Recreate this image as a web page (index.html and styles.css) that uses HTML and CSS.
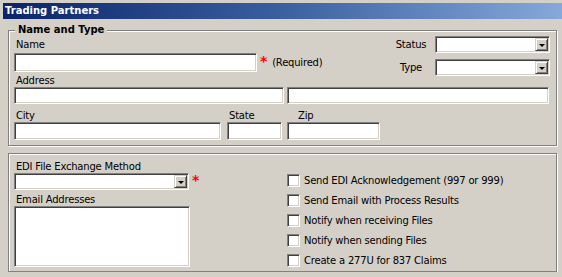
FILE: index.html
```html
<!DOCTYPE html>
<html lang="en">
<head>
    <meta charset="UTF-8">
    <title>Trading Partners</title>
    <link rel="stylesheet" href="styles.css">
</head>
<body>

<div class="window">
    <div class="titlebar">Trading Partners</div>

    <div class="group group-name">
        <span class="legend">Name and Type</span>

        <div class="row-top">
            <div class="name-col">
                <label class="lbl">Name</label>
                <div class="req-line">
                    <input type="text" class="txt w-name">
                    <span class="req">*</span>
                    <span class="req-note">(Required)</span>
                </div>
            </div>
            <div class="status-grid">
                <label class="lbl-side">Status</label>
                <div class="combo w-status"><span class="combo-field"></span><span class="combo-btn"><i class="arrow"></i></span></div>
                <label class="lbl-side">Type</label>
                <div class="combo w-status"><span class="combo-field"></span><span class="combo-btn"><i class="arrow"></i></span></div>
            </div>
        </div>

        <label class="lbl">Address</label>
        <div class="row address-row">
            <input type="text" class="txt h17 w-addr1">
            <input type="text" class="txt h17 w-addr2">
        </div>

        <div class="row city-row">
            <div class="field">
                <label class="lbl">City</label>
                <input type="text" class="txt h18 w-city">
            </div>
            <div class="field">
                <label class="lbl">State</label>
                <input type="text" class="txt h18 w-state">
            </div>
            <div class="field">
                <label class="lbl lbl-zip">Zip</label>
                <input type="text" class="txt h18 w-zip">
            </div>
        </div>
    </div>

    <div class="group group-edi">
        <div class="edi-left">
            <label class="lbl">EDI File Exchange Method</label>
            <div class="req-line">
                <div class="combo w-edi"><span class="combo-field"></span><span class="combo-btn"><i class="arrow"></i></span></div>
                <span class="req req-edi">*</span>
            </div>
            <label class="lbl lbl-email">Email Addresses</label>
            <textarea class="txt emails"></textarea>
        </div>

        <ul class="checks">
            <li><input type="checkbox" class="chk"> Send EDI Acknowledgement (997 or 999)</li>
            <li><input type="checkbox" class="chk"> Send Email with Process Results</li>
            <li><input type="checkbox" class="chk"> Notify when receiving Files</li>
            <li><input type="checkbox" class="chk"> Notify when sending Files</li>
            <li><input type="checkbox" class="chk"> Create a 277U for 837 Claims</li>
        </ul>
    </div>
</div>

</body>
</html>
```

FILE: styles.css
```css
body {
    margin: 0;
    background-color: #d4d0c8;
    font-family: "DejaVu Sans", Verdana, sans-serif;
    font-size: 10px;
    letter-spacing: -0.2px;
    color: #000;
}
.window {
    padding-top: 3px;
}
.titlebar {
    margin: 0 0 0 3px;
    height: 16px;
    line-height: 16px;
    padding-left: 2px;
    background: linear-gradient(to right, #0a246a, #3a60a0 50%, #86a8da);
    color: #fff;
    font-weight: bold;
    letter-spacing: 0;
}

/* etched group boxes */
.group {
    position: relative;
    margin: 11px 0 0 8px;
    width: 549px;
    box-sizing: border-box;
    border: 1px solid #808080;
    box-shadow: inset 1px 1px 0 #fff, 1px 1px 0 #fff;
    padding: 5px 6px 5px 5px;
}
.group-edi {
    margin-top: 7px;
    padding: 7px 6px 4px 5px;
    height: 119px;
    display: flex;
}
.legend {
    position: absolute;
    top: -7px;
    left: 6px;
    padding: 0 3px;
    background-color: #d4d0c8;
    font-weight: bold;
    letter-spacing: 0;
    line-height: 12px;
}

.lbl {
    display: block;
    height: 12px;
    line-height: 12px;
    padding-left: 2px;
}
.lbl-side {
    justify-self: center;
    line-height: 12px;
}

.row-top {
    display: flex;
    justify-content: space-between;
    margin-bottom: -1px;
}
.name-col {
    padding-top: 3px;
}
.name-col .lbl {
    margin-bottom: 2px;
}
.req-line {
    display: flex;
    align-items: flex-start;
}
.req {
    color: #f00;
    font-weight: bold;
    font-size: 14px;
    line-height: 14px;
    margin: 1px 0 0 3px;
}
.req-note {
    margin: 4px 0 0 5px;
    line-height: 12px;
}
.status-grid {
    display: grid;
    grid-template-columns: 36px 115px;
    column-gap: 6px;
    row-gap: 6px;
    align-items: center;
}

/* sunken fields */
.txt {
    box-sizing: border-box;
    margin: 0;
    padding: 0 3px;
    border: 1px solid;
    border-color: #808080 #fff #fff #808080;
    box-shadow: inset 1px 1px 0 #404040, inset -1px -1px 0 #d4d0c8;
    background-color: #fff;
    font: inherit;
    outline: none;
}
.w-name { width: 243px; height: 19px; }
.h17 { height: 17px; }
.h18 { height: 18px; }
.w-addr1 { width: 270px; }
.w-addr2 { width: 262px; }
.w-city { width: 207px; }
.w-state { width: 55px; }
.w-zip { width: 93px; }

.row {
    display: flex;
}
.address-row {
    gap: 3px;
}
.city-row {
    margin-top: 6px;
    gap: 6px;
}
.city-row .field:last-child {
    margin-left: -1px;
}
.lbl-zip {
    padding-left: 11px;
}

/* combo boxes */
.combo {
    box-sizing: border-box;
    height: 17px;
    display: flex;
    padding: 1px;
    border: 1px solid;
    border-color: #808080 #fff #fff #808080;
    box-shadow: inset 1px 1px 0 #404040, inset -1px -1px 0 #d4d0c8;
    background-color: #fff;
}
.w-status { width: 115px; }
.w-edi { width: 175px; }
.combo-field {
    flex: 1;
}
.combo-btn {
    box-sizing: border-box;
    width: 13px;
    display: flex;
    align-items: center;
    justify-content: center;
    background-color: #d4d0c8;
    border: 1px solid;
    border-color: #d4d0c8 #404040 #404040 #d4d0c8;
    box-shadow: inset 1px 1px 0 #fff, inset -1px -1px 0 #808080;
}
.arrow {
    width: 0;
    height: 0;
    border-left: 3px solid transparent;
    border-right: 3px solid transparent;
    border-top: 3px solid #000;
    margin-top: 1px;
}

.edi-left {
    width: 273px;
    display: flex;
    flex-direction: column;
}
.req-edi {
    margin-top: 0;
}
.lbl-email {
    margin-top: 4px;
}
.emails {
    width: 176px;
    height: 61px;
    resize: none;
    padding: 2px;
}

.checks {
    list-style-type: none;
    margin: 0;
    padding: 9px 0 0 0;
}
.checks li {
    height: 20px;
    display: flex;
    align-items: center;
}
.chk {
    appearance: none;
    box-sizing: border-box;
    width: 13px;
    height: 13px;
    margin: 0 4px 0 0;
    border: 1px solid;
    border-color: #808080 #fff #fff #808080;
    box-shadow: inset 1px 1px 0 #404040, inset -1px -1px 0 #d4d0c8;
    background-color: #fff;
}
```
